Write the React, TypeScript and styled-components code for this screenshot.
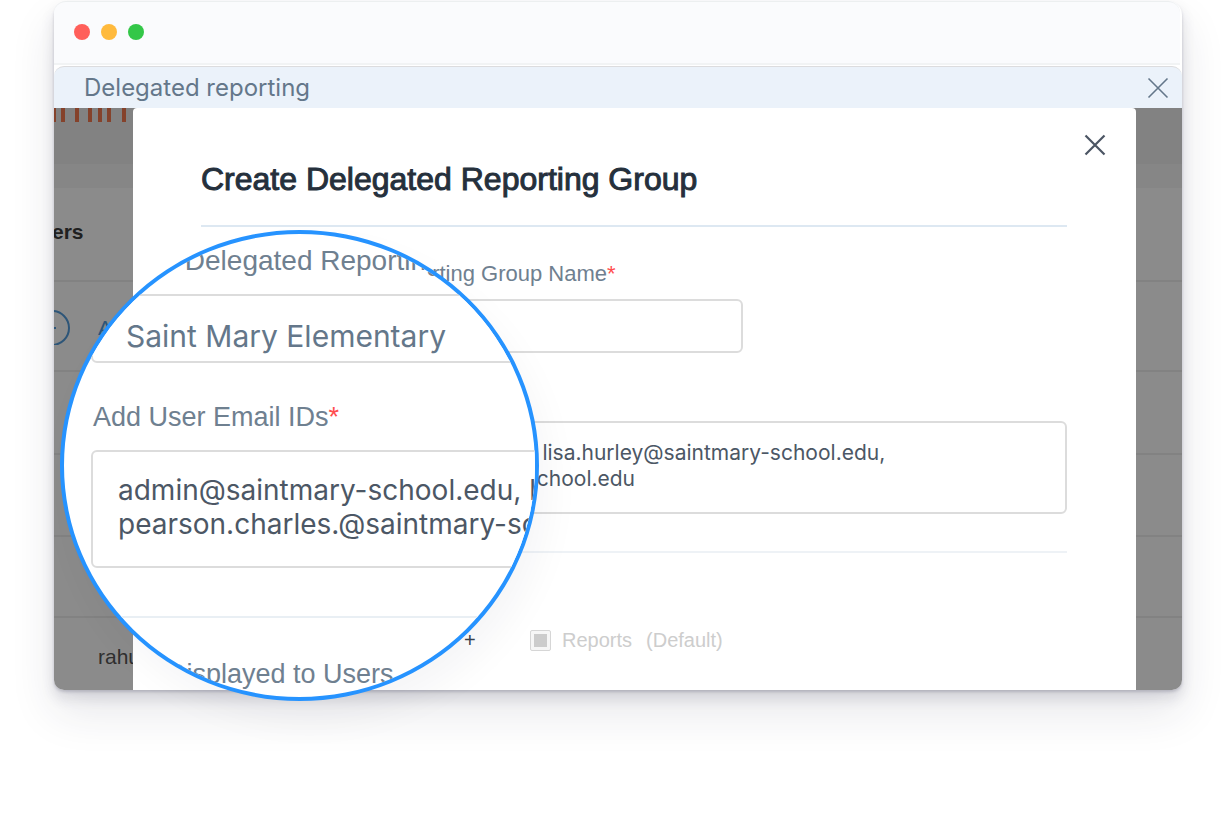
import React from "react";
import styled, { createGlobalStyle } from "styled-components";

const ui = `Inter, "Open Sans", sans-serif`;
const form = `"Liberation Sans", Arial, sans-serif`;

const GlobalStyle = createGlobalStyle`
  *, *::before, *::after { box-sizing: border-box; }
  body { margin: 0; background: #ffffff; }
  button, input, textarea { font: inherit; margin: 0; }
`;

const Page = styled.main`
  min-height: 828px;
  padding: 1px 44px 0 54px;
`;

const Window = styled.section`
  position: relative;
  border-radius: 14px 14px 10px 10px;
  background: #ffffff;
  box-shadow: 0 2px 3px rgba(50, 50, 80, 0.2), 0 8px 14px rgba(50, 50, 80, 0.14),
    0 22px 46px rgba(40, 40, 60, 0.11);
`;

const TitleBar = styled.header`
  display: flex;
  align-items: center;
  gap: 11px;
  height: 64px;
  margin-right: 2px;
  padding: 0 20px 2px;
  border-top: 1px solid #eceff0;
  border-bottom: 2px solid #f1f3f4;
  border-radius: 12px 12px 0 0;
  background: #fafbfd;
`;

const Dot = styled.span<{ $color: string }>`
  width: 16px;
  height: 16px;
  border-radius: 50%;
  background: ${(p) => p.$color};
`;

const Banner = styled.div`
  display: flex;
  align-items: center;
  justify-content: space-between;
  height: 42px;
  margin-top: 1px;
  padding: 0 13px 0 30px;
  border-top: 1px solid #dcdcde;
  border-radius: 10px 10px 0 0;
  background: #ebf2fa;
  font: 400 24px/26px ${ui};
  color: #64778a;
`;

const IconButton = styled.button`
  display: flex;
  padding: 0;
  border: 0;
  background: none;
  color: inherit;
`;

const Stage = styled.div`
  display: grid;
  grid-template: minmax(582px, auto) / minmax(0, 1fr);
  overflow: hidden;
  border-radius: 0 0 10px 10px;
  background: #8b8b8b;
`;

const Backdrop = styled.div`
  grid-area: 1 / 1;
  font: 400 21px/24px ${form};
  color: #2f2f2f;
`;

const Strip = styled.div<{ $height: number; $tone: string }>`
  height: ${(p) => p.$height}px;
  background: ${(p) => p.$tone};
`;

const BackRow = styled.div<{ $height: number; $last?: boolean }>`
  display: flex;
  align-items: center;
  gap: 27px;
  height: ${(p) => p.$height}px;
  padding: ${(p) => (p.$last ? "6px 0 0 44px" : "0")};
  border-bottom: ${(p) => (p.$last ? "0" : "2px solid #828282")};
`;

const ColumnName = styled.strong`
  margin-left: -2px;
  padding-bottom: 4px;
  color: #202020;
`;

const PersonLink = styled.a`
  padding-top: 4px;
  color: #2d5578;
  text-decoration: none;
`;

const Dialog = styled.section`
  grid-area: 1 / 1;
  margin: 0 46px 0 79px;
  padding: 26px 69px 0 68px;
  border-radius: 4px 4px 0 0;
  background: #ffffff;
  font-family: ${form};
`;

const DialogTop = styled.div`
  display: flex;
  justify-content: flex-end;
  height: 24px;
  margin-right: -39px;
  color: #4b5563;
`;

const Heading = styled.h1`
  margin: 0;
  height: 69px;
  padding-top: 3px;
  border-bottom: 2px solid #dde8f2;
  font: 400 32px/36px ${form};
  -webkit-text-stroke: 1px #25303c;
  color: #25303c;
`;

const Label = styled.label<{ $size?: number }>`
  display: block;
  font: 400 ${(p) => p.$size ?? 22}px/${(p) => (p.$size ? 32 : 26)}px ${form};
  color: #6f8090;
`;

const Required = styled.span`
  color: #ff4d4f;
`;

const Field = styled.input<{ $large?: boolean }>`
  display: block;
  width: ${(p) => (p.$large ? "700px" : "542px")};
  height: ${(p) => (p.$large ? 69 : 54)}px;
  padding: ${(p) => (p.$large ? "14px 33px 0" : "0 16px")};
  border: 2px solid #dcdcdc;
  border-radius: 6px;
  outline: 0;
  background: #ffffff;
  font: 400 ${(p) => (p.$large ? "30px" : "22px")} ${ui};
  color: #64778a;
`;

const Emails = styled.textarea<{ $large?: boolean }>`
  display: block;
  width: ${(p) => (p.$large ? "900px" : "100%")};
  height: ${(p) => (p.$large ? 118 : 93)}px;
  padding: ${(p) => (p.$large ? "21px 25px" : "17px 31px")};
  border: 2px solid #dcdcdc;
  border-radius: 6px;
  outline: 0;
  resize: none;
  overflow: hidden;
  white-space: pre;
  background: #ffffff;
  font: 400 ${(p) => (p.$large ? "28px/34px" : "21px/26px")} ${ui};
  color: #4c5765;
`;

const NameGroup = styled.div`
  padding-top: 34px;
  display: grid;
  gap: 12px;
`;

const EmailGroup = styled.div`
  padding: 68px 0 37px;
  border-bottom: 2px solid #eef2f6;
`;

const Options = styled.div`
  display: flex;
  align-items: center;
  gap: 11px;
  padding: 75px 0 0 263px;
  font: 400 20px/24px ${form};
  color: #cdcdcd;
`;

const Plus = styled.span`
  width: 55px;
  color: #39434f;
`;

const Check = styled.input`
  appearance: none;
  width: 21px;
  height: 21px;
  border: 1px solid #d6d6d6;
  border-radius: 2px;
  background: linear-gradient(#cccccc, #cccccc) center / 13px 13px no-repeat #f6f6f6;
`;

const OptionLabel = styled.label`
  display: flex;
  gap: 14px;
`;

const Lens = styled.aside`
  position: absolute;
  top: 229px;
  left: 6px;
  width: 479px;
  height: 471px;
  overflow: hidden;
  border: 4px solid #2693ff;
  border-radius: 50%;
  background: #ffffff;
  box-shadow: 10px 20px 36px rgba(30, 30, 60, 0.04);
`;

const LensForm = styled.div`
  padding: 11px 0 0 27px;
`;

const LensField = styled.div`
  display: grid;
  gap: 17px;
  margin-bottom: 38px;

  > label {
    padding-left: 2px;
  }
`;

const LensRule = styled.hr`
  margin: 48px 0 40px;
  border: 0;
  border-top: 2px solid #e9eff4;
`;

const LensNote = styled.p`
  margin: 0 0 0 76px;
  font: 400 27px/32px ${form};
  color: #6f8090;
`;

const addresses =
  "admin@saintmary-school.edu, lisa.hurley@saintmary-school.edu,\npearson.charles.@saintmary-school.edu";

function Cross({ weight }: { weight: number }) {
  return (
    <svg width="22" height="22" viewBox="0 0 22 22" fill="none" stroke="currentColor" strokeWidth={weight}>
      <path d="M1.5 1.5 20.5 20.5M20.5 1.5 1.5 20.5" />
    </svg>
  );
}

function Bars() {
  return (
    <svg width="79" height="14" viewBox="0 0 79 14" fill="#85422b" display="block">
      {[-2, 7, 21, 34, 44, 53, 68].map((x) => (
        <rect key={x} x={x} width="4" height="14" />
      ))}
    </svg>
  );
}

export default function App() {
  return (
    <>
      <GlobalStyle />
      <Page>
        <Window>
          <TitleBar>
            <Dot $color="#ff5f5a" />
            <Dot $color="#ffba3d" />
            <Dot $color="#33c748" />
          </TitleBar>
          <Banner>
            Delegated reporting
            <IconButton aria-label="Close panel">
              <Cross weight={1.6} />
            </IconButton>
          </Banner>
          <Stage>
            <Backdrop>
              <Strip $height={56} $tone="#828282">
                <Bars />
              </Strip>
              <Strip $height={24} $tone="#868686" />
              <BackRow $height={94}>
                <ColumnName>ers</ColumnName>
              </BackRow>
              <BackRow $height={90}>
                <svg width="17" height="38" viewBox="0 0 17 38" fill="none" stroke="#2d5578" strokeWidth="2">
                  <circle cx="-2" cy="21" r="17" />
                  <path d="M-8 21H2" />
                </svg>
                <PersonLink href="#person">A</PersonLink>
              </BackRow>
              <BackRow $height={83} />
              <BackRow $height={82} />
              <BackRow $height={81} />
              <BackRow $height={72} $last>
                rahu
              </BackRow>
            </Backdrop>
            <Dialog>
              <DialogTop>
                <IconButton aria-label="Close dialog">
                  <Cross weight={2.2} />
                </IconButton>
              </DialogTop>
              <Heading>Create Delegated Reporting Group</Heading>
              <NameGroup>
                <Label htmlFor="group">
                  Create Delegated Reporting Group Name<Required>*</Required>
                </Label>
                <Field id="group" />
              </NameGroup>
              <EmailGroup>
                <Emails aria-label="User Email IDs" defaultValue={addresses} />
              </EmailGroup>
              <Options>
                <Plus>+</Plus>
                <Check type="checkbox" id="reports" disabled />
                <OptionLabel htmlFor="reports">
                  <span>Reports</span>
                  <span>(Default)</span>
                </OptionLabel>
              </Options>
            </Dialog>
          </Stage>
          <Lens>
            <LensForm>
              <LensField>
                <Label $size={28} htmlFor="lens-group">
                  Create Delegated Reporting
                </Label>
                <Field $large id="lens-group" defaultValue="Saint Mary Elementary" />
              </LensField>
              <LensField>
                <Label $size={27} htmlFor="lens-emails">
                  Add User Email IDs<Required>*</Required>
                </Label>
                <Emails $large id="lens-emails" defaultValue={addresses} />
              </LensField>
              <LensRule />
              <LensNote>Displayed to Users</LensNote>
            </LensForm>
          </Lens>
        </Window>
      </Page>
    </>
  );
}
